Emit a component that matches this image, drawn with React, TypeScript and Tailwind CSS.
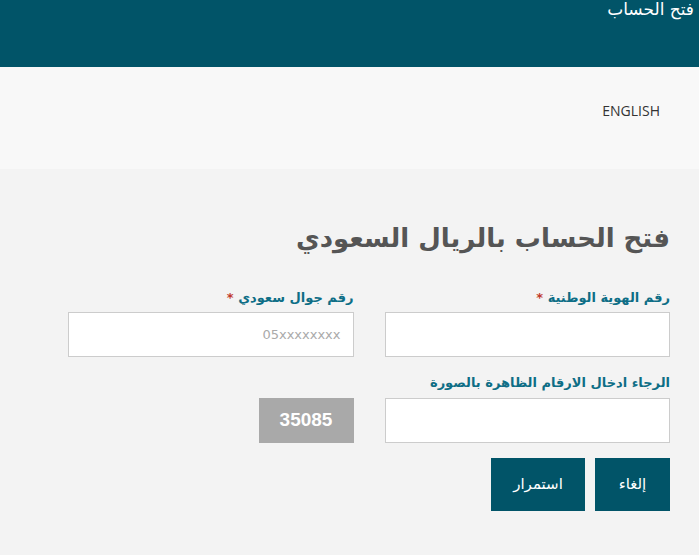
export default function App() {
  return (
    <div
      dir="rtl"
      className="min-h-[555px] bg-[#f3f3f3] font-['DejaVu_Sans',sans-serif]"
    >
      <header className="h-[67px] bg-[#015468] pr-[5px]">
        <h1 className="text-[17px] leading-[18px] text-white">فتح الحساب</h1>
      </header>

      <div className="flex h-[102px] items-center bg-[#f8f8f8] pr-[39px]">
        <a
          href="#"
          dir="ltr"
          className="mt-[-16px] font-['Open_Sans',sans-serif] text-[14px] text-[#333]"
        >
          ENGLISH
        </a>
      </div>

      <main className="pr-[29px] pl-[68px] pt-[49px]">
        <h2 className="text-[26px] font-bold leading-[40px] text-[#555]">
          فتح الحساب بالريال السعودي
        </h2>

        <div className="mt-[31px] grid grid-cols-2 gap-x-[31px]">
          <div className="flex flex-col">
            <label className="mb-[5px] text-[13px] font-bold leading-[18px] text-[#0e6e86]">
              رقم الهوية الوطنية <span className="text-[#c0392b]">*</span>
            </label>
            <input
              type="text"
              className="h-[45px] border border-[#ccc] bg-white px-3 outline-none"
            />
          </div>
          <div className="flex flex-col">
            <label className="mb-[5px] text-[13px] font-bold leading-[18px] text-[#0e6e86]">
              رقم جوال سعودي <span className="text-[#c0392b]">*</span>
            </label>
            <input
              type="text"
              placeholder="05xxxxxxxx"
              className="h-[45px] border border-[#ccc] bg-white px-3 text-[13px] outline-none placeholder:text-[#aaa]"
            />
          </div>

          <div className="mt-[17px] flex flex-col">
            <label className="mb-[6px] text-[13px] font-bold leading-[18px] text-[#0e6e86]">
              الرجاء ادخال الارقام الظاهرة بالصورة
            </label>
            <input
              type="text"
              className="h-[45px] border border-[#ccc] bg-white px-3 outline-none"
            />
          </div>
          <div className="mt-[17px] flex items-end">
            <div className="flex h-[45px] w-[95px] items-center justify-center bg-[#a9a9a9] font-['Liberation_Sans',sans-serif] text-[19px] font-bold text-white">
              35085
            </div>
          </div>
        </div>

        <div className="mt-[15px] flex gap-[10px]">
          <button className="h-[53px] w-[75px] bg-[#015468] text-[15px] text-white">
            إلغاء
          </button>
          <button className="h-[53px] w-[94px] bg-[#015468] text-[15px] text-white">
            استمرار
          </button>
        </div>
      </main>
    </div>
  );
}
